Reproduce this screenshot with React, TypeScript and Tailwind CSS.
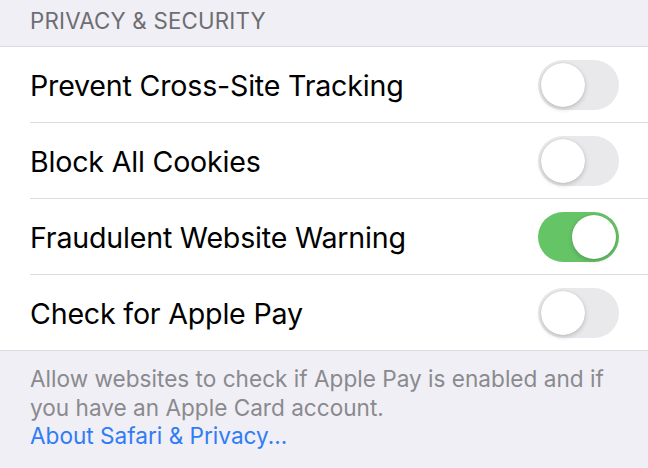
import React from "react";

function Toggle({ on }: { on: boolean }) {
  return (
    <div
      className={
        "relative h-[50px] w-[81px] shrink-0 rounded-full " +
        (on ? "bg-[#65c466]" : "bg-[#e9e9eb]")
      }
    >
      <div
        className={
          "absolute top-[3px] h-[44px] w-[44px] rounded-full bg-white shadow-[0_2px_5px_rgba(0,0,0,0.18),0_0_1px_rgba(0,0,0,0.2)] " +
          (on ? "left-[34px]" : "left-[3px]")
        }
      />
    </div>
  );
}

const rows = [
  { label: "Prevent Cross-Site Tracking", on: false },
  { label: "Block All Cookies", on: false },
  { label: "Fraudulent Website Warning", on: true },
  { label: "Check for Apple Pay", on: false },
];

export default function App() {
  return (
    <div
      className="h-[468px] w-[648px] overflow-hidden bg-[#f0eff5] antialiased"
      style={{ fontFamily: "Inter, 'Liberation Sans', sans-serif" }}
    >
      <div className="flex h-[46px] items-center pl-[30px] pb-[4px] text-[22.3px] tracking-[0.2px] text-[#6d6d72]">
        PRIVACY &amp; SECURITY
      </div>
      <div className="border-y border-[#dcdce0] bg-white">
        {rows.map((r, i) => (
          <div key={r.label} className="pl-[30px]">
            <div
              className={
                "flex items-center justify-between pr-[29px] " +
                (i < rows.length - 1 ? "h-[76px] border-b border-[#dcdce0]" : "h-[75px]")
              }
            >
              <span className="pt-[3px] text-[28.6px] tracking-[-0.2px] text-black">{r.label}</span>
              <Toggle on={r.on} />
            </div>
          </div>
        ))}
      </div>
      <div className="pl-[30px] pr-[20px] pt-[14px] text-[22.6px] leading-[28.5px] text-[#8a8a8e]">
        <div>Allow websites to check if Apple Pay is enabled and if</div>
        <div>you have an Apple Card account.</div>
        <div className="text-[#2f7cf6]">About Safari &amp; Privacy...</div>
      </div>
    </div>
  );
}
